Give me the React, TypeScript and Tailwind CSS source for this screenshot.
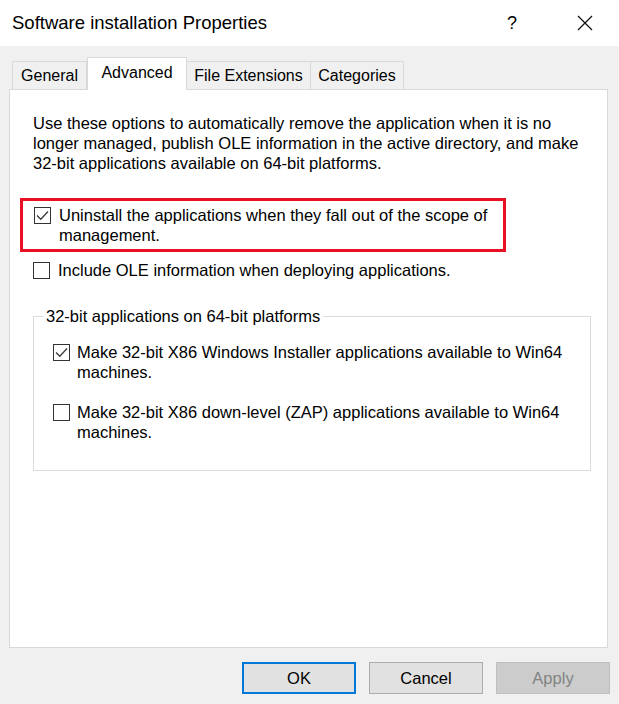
import React from "react";

const FONT = { fontFamily: '"Liberation Sans", Arial, sans-serif' };

function Check({ checked }: { checked: boolean }) {
  return (
    <span className="mt-[2px] flex h-[17px] w-[17px] shrink-0 items-center justify-center border border-[#333333] bg-white">
      {checked && (
        <svg width="13" height="11" viewBox="0 0 13 11" fill="none">
          <path d="M1 5.5 L4.8 9.3 L12 1.5" stroke="#3c3c3c" strokeWidth="1.3" />
        </svg>
      )}
    </span>
  );
}

function Option({
  checked,
  gap,
  children,
}: {
  checked: boolean;
  gap: string;
  children: React.ReactNode;
}) {
  return (
    <div className={`flex items-start ${gap}`}>
      <Check checked={checked} />
      <div className="whitespace-nowrap leading-[20px]">{children}</div>
    </div>
  );
}

const TABS = [
  { label: "General", w: "w-[75px]" },
  { label: "Advanced", w: "w-[100px]" },
  { label: "File Extensions", w: "w-[125px]" },
  { label: "Categories", w: "w-[94px]" },
];

export default function App() {
  return (
    <div
      className="flex h-[704px] w-[619px] flex-col bg-[#f0f0f0] text-[16.5px] text-black"
      style={FONT}
    >
      {/* title bar */}
      <div className="flex h-[46px] shrink-0 items-center bg-white pl-[12px]">
        <span className="text-[18.5px]">Software installation Properties</span>
        <span className="ml-auto mr-[60px] text-[18px]">?</span>
        <svg width="16" height="16" viewBox="0 0 16 16" className="mr-[26px]">
          <path d="M1 1 L15 15 M15 1 L1 15" stroke="#111" strokeWidth="1.3" />
        </svg>
      </div>

      {/* tabs */}
      <div className="mt-[11px] flex h-[32px] items-end pl-[12px] text-[16px]">
        {TABS.map((t, i) =>
          i === 1 ? (
            <div
              key={t.label}
              className={`${t.w} relative z-10 -mb-[1px] flex h-[33px] items-start justify-center border border-b-0 border-[#d9d9d9] bg-white pt-[3px]`}
            >
              {t.label}
            </div>
          ) : (
            <div
              key={t.label}
              className={`${t.w} -ml-[1px] flex h-[28px] items-center justify-center border border-b-0 border-[#d9d9d9] bg-[#f0f0f0] first:ml-0`}
            >
              {t.label}
            </div>
          )
        )}
      </div>

      {/* panel */}
      <div className="ml-[9px] mr-[11px] h-[559px] border border-[#d9d9d9] bg-white">
        <p className="whitespace-nowrap pl-[23px] pt-[23px] leading-[20px]">
          Use these options to automatically remove the application when it is no
          <br />
          longer managed, publish OLE information in the active directory, and make
          <br />
          32-bit applications available on 64-bit platforms.
        </p>

        <div className="ml-[10px] mt-[25px] w-[486px] border-[3px] border-[#e81123] pb-[4px] pl-[11px] pt-[4px]">
          <Option checked gap="gap-[8px]">
            Uninstall the applications when they fall out of the scope of
            <br />
            management.
          </Option>
        </div>

        <div className="ml-[23px] mt-[8px]">
          <Option checked={false} gap="gap-[8px]">
            Include OLE information when deploying applications.
          </Option>
        </div>

        <fieldset className="ml-[23px] mt-[26px] w-[558px] border border-[#dcdcdc] pb-[28px] pl-[19px] pt-[16px]">
          <legend className="-ml-[10px] px-[3px] leading-[20px]">
            32-bit applications on 64-bit platforms
          </legend>
          <div className="flex flex-col gap-[20px]">
            <Option checked gap="gap-[7px]">
              Make 32-bit X86 Windows Installer applications available to Win64
              <br />
              machines.
            </Option>
            <Option checked={false} gap="gap-[7px]">
              Make 32-bit X86 down-level (ZAP) applications available to Win64
              <br />
              machines.
            </Option>
          </div>
        </fieldset>
      </div>

      {/* buttons */}
      <div className="mr-[9px] mt-[14px] flex justify-end gap-[13px] text-[16.5px]">
        <button className="h-[32px] w-[114px] border-2 border-[#0078d7] bg-[#e1e1e1]">
          OK
        </button>
        <button className="h-[32px] w-[114px] border border-[#adadad] bg-[#e1e1e1]">
          Cancel
        </button>
        <button className="h-[32px] w-[114px] border border-[#bfbfbf] bg-[#cccccc] text-[#838383]">
          Apply
        </button>
      </div>
    </div>
  );
}
